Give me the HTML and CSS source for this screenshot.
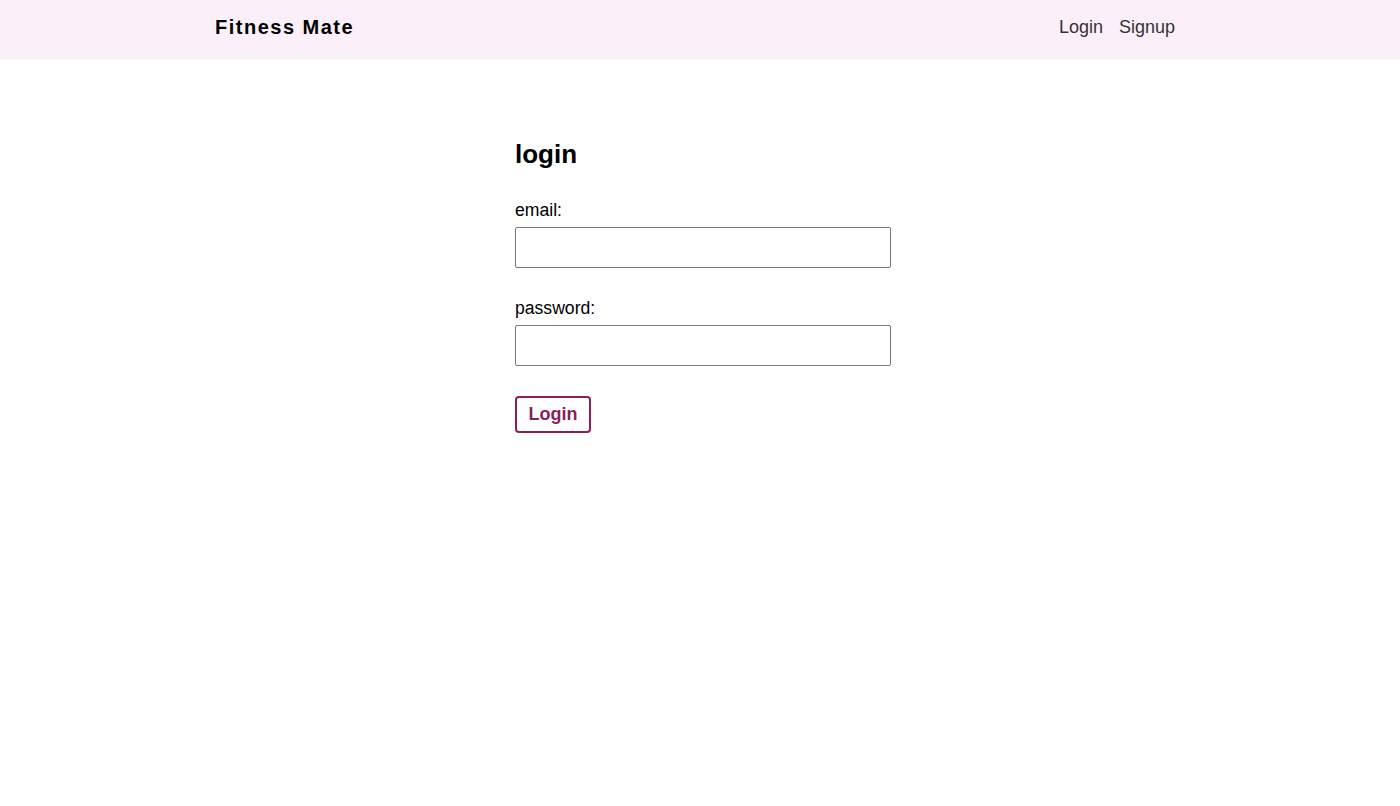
FILE: index.html
```html
<!DOCTYPE html>
<html>
<head>
<meta charset="utf-8">
<title>Fitness Mate</title>
<link rel="stylesheet" href="styles.css">
</head>
<body>
<header class="header">
  <div class="container">
    <a class="logo" href="#">Fitness Mate</a>
    <nav class="nav">
      <a href="#">Login</a>
      <a href="#">Signup</a>
    </nav>
  </div>
</header>
<main class="page">
  <form class="login">
    <h3 class="title">login</h3>
    <label class="label">email:</label>
    <input class="field" type="email">
    <label class="label">password:</label>
    <input class="field" type="password">
    <button class="btn" type="button">Login</button>
  </form>
</main>
</body>
</html>
```
FILE: styles.css
```css
* { box-sizing: border-box; }
body {
  margin: 0;
  font-family: "Liberation Sans", Arial, sans-serif;
  background: #fff;
  color: #000;
}
.header {
  background: #fbeff9;
  height: 59px;
}
.container {
  width: 970px;
  margin: 0 auto;
  height: 100%;
  padding: 0 10px 4px 0;
  display: flex;
  align-items: center;
  justify-content: space-between;
}
.logo {
  color: #000;
  text-decoration: none;
  font-weight: bold;
  font-size: 20px;
  letter-spacing: 1.5px;
}
.nav {
  display: flex;
  gap: 16px;
}
.nav a {
  color: #333;
  text-decoration: none;
  font-size: 18px;
}
.page {
  padding-top: 80px;
}
.login {
  width: 370px;
  margin: 0 auto;
  display: flex;
  flex-direction: column;
  align-items: flex-start;
}
.title {
  margin: 0 0 31px;
  font-size: 26px;
  font-weight: bold;
  line-height: 30px;
}
.label {
  font-size: 17.6px;
  line-height: 20px;
  margin-bottom: 7px;
}
.field {
  width: 376px;
  height: 41px;
  border: 1px solid #777;
  border-radius: 2px;
  margin-bottom: 30px;
  font-size: 16px;
  padding: 10px;
}
.btn {
  background: #fff;
  border: 2px solid #8b1e5b;
  color: #8b1e5b;
  border-radius: 4px;
  font-family: inherit;
  font-weight: bold;
  font-size: 18px;
  height: 37px;
  width: 76px;
  padding: 0;
}
```
